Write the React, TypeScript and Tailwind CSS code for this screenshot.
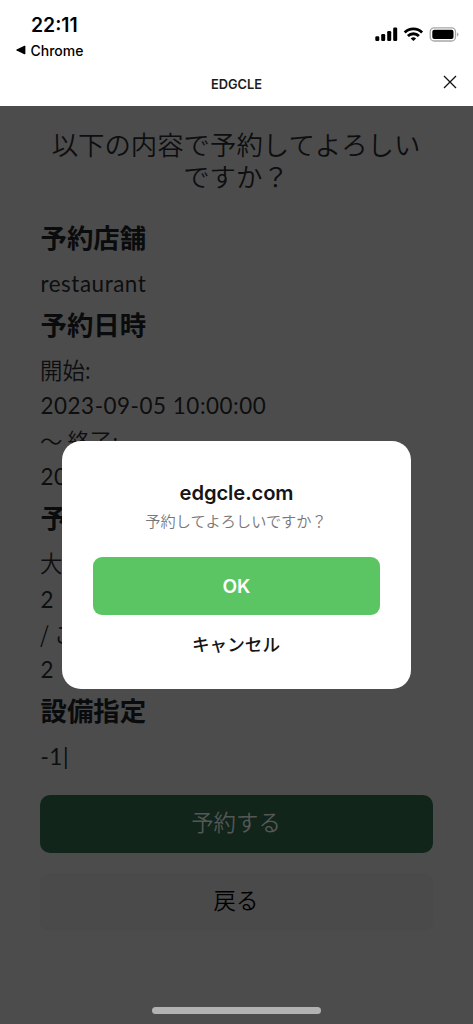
import React from "react";

const jp = "font-['Noto_Sans_CJK_JP',sans-serif]";
const jpBody = "font-['Noto_Sans_CJK_JP_DemiLight','Noto_Sans_CJK_JP',sans-serif]";
const ui = "font-['Inter','Noto_Sans_CJK_JP',sans-serif]";

function StatusIcons() {
  return (
    <svg width="86" height="18" viewBox="0 0 86 18" aria-hidden="true">
      <rect x="0.3" y="11.3" width="4" height="4.700" rx="1.2" />
      <rect x="6.2" y="9" width="4" height="7" rx="1.2" />
      <rect x="12.2" y="6" width="4" height="10" rx="1.2" />
      <rect x="18.2" y="2.5" width="4" height="13.500" rx="1.2" />
      <g fill="none" stroke="#000" strokeWidth="2.800">
        <path d="M29.7 7.500a12.400 12.400 0 0 1 17.400 0" />
        <path d="M32.900 11a7.900 7.900 0 0 1 11 0" />
      </g>
      <path d="M38.400 16l-2.700-2.500a4 4 0 0 1 5.400 0z" />
      <rect x="55.2" y="2.8" width="25.300" height="13.200" rx="4" fill="none" stroke="#a6a6a6" strokeWidth="1.3" />
      <rect x="57.3" y="4.8" width="21.200" height="9.200" rx="2" />
      <path d="M82.200 7.400v4.200c1.700-.7 1.700-3.500 0-4.200z" fill="#999" />
    </svg>
  );
}

function Section({ title, lines }: { title: string; lines: string[] }) {
  return (
    <section className="mb-[6.6px]">
      <h2 className={`${jp} mb-[13px] h-8 pl-[0.6px] text-[26.400px] leading-8 font-bold text-[#0a0b0c]`}>{title}</h2>
      {lines.map((line, i) => {
        const latin = /^[\x20-\x7e]+$/.test(line);
        return (
          <p
            key={i}
            className={
              latin
                ? "h-[35.400px] pl-[0.5px] leading-[35.400px] tracking-[0.55px] whitespace-pre"
                : `${jpBody} h-[35.400px] leading-[33.400px] font-[350] whitespace-pre`
            }
          >
            {line}
          </p>
        );
      })}
    </section>
  );
}

export default function App() {
  return (
    <div className="relative flex h-[1024px] w-[473px] flex-col overflow-hidden bg-[#4c4c4c]">
      <header className={`${ui} flex h-[106px] shrink-0 flex-col bg-white text-black`}>
        <div className="flex h-[62px] justify-between pt-[14px] pr-[12px] pl-4">
          <div>
            <div className="h-6 pl-[15px] text-[19.400px] leading-[23px] font-semibold">22:11</div>
            <div className="flex h-6 items-center gap-[4.500px] text-[14px] font-medium">
              <svg width="10" height="10" viewBox="0 0 10 10" aria-hidden="true">
                <path d="M.6 4.400 8.300.8Q9.400.4 9.400 1.500v7Q9.400 9.600 8.300 9.200L.6 5.600Q-.2 5 .6 4.400z" />
              </svg>
              Chrome
            </div>
          </div>
          <div className="pt-[11px]"><StatusIcons /></div>
        </div>
        <div className="grid h-11 grid-cols-[1fr_auto_1fr] items-center px-4">
          <span />
          <h1 className="pt-[2px] text-[12.800px] font-semibold text-[#1c1c1c]">EDGCLE</h1>
          <svg className="-mt-1 justify-self-end" width="14" height="14" viewBox="0 0 14 14" aria-hidden="true">
            <path d="M1 1l12 12M13 1 1 13" stroke="#111" strokeWidth="1.3" />
          </svg>
        </div>
      </header>

      <main className="flex flex-1 flex-col px-10 pt-[22px] font-['Lato','Noto_Sans_CJK_JP',sans-serif] text-[22.400px] font-normal text-[#0d0e0f]">
        <div className={`${jpBody} mb-[29px] pr-px text-center text-[26.400px] leading-8 font-[350]`}>
          以下の内容で予約してよろしい
          <br />
          ですか？
        </div>
        <Section title="予約店舗" lines={["restaurant"]} />
        <Section title="予約日時" lines={["開始:", "2023-09-05 10:00:00", "〜 終了:", "20"]} />
        <Section title="予約人数" lines={["大人", "2", "/ こ", "2"]} />
        <Section title="設備指定" lines={["-1|"]} />
        <div className={`${jpBody} mt-[13.600px] flex flex-col gap-5 font-[350]`}>
          <button className="h-[58px] rounded-[10px] bg-[#11251a] pr-px pb-[4px] text-[22.400px] text-[#555756]">予約する</button>
          <button className="h-[58px] rounded-[10px] bg-[#4a4a4a] pr-px pb-[4px] text-[22.400px] text-black">戻る</button>
        </div>
      </main>

      <div className="absolute bottom-[10px] left-[152px] h-[7px] w-[169px] rounded-full bg-[#b2b2b2]" />

      <div role="dialog" className={`${ui} absolute top-[441px] left-[62px] flex h-[248px] w-[349px] flex-col items-stretch rounded-[19px] bg-white px-[31px] pt-[39px] text-center`}>
        <h2 className="h-[27px] text-[20.200px] leading-[26px] font-semibold tracking-[-0.1px] text-[#151515]">edgcle.com</h2>
        <p className={`${jpBody} h-[29px] pr-px text-[15.200px] leading-[27px] font-[350] text-[#777]`}>予約してよろしいですか？</p>
        <button className="mt-[21px] h-[58px] rounded-[9px] bg-[#5bc564] pt-[2px] text-[19px] font-semibold text-white">OK</button>
        <button className="h-[58px] pt-[2px] pr-px text-[17.600px] font-medium text-[#151515]">キャンセル</button>
      </div>
    </div>
  );
}
